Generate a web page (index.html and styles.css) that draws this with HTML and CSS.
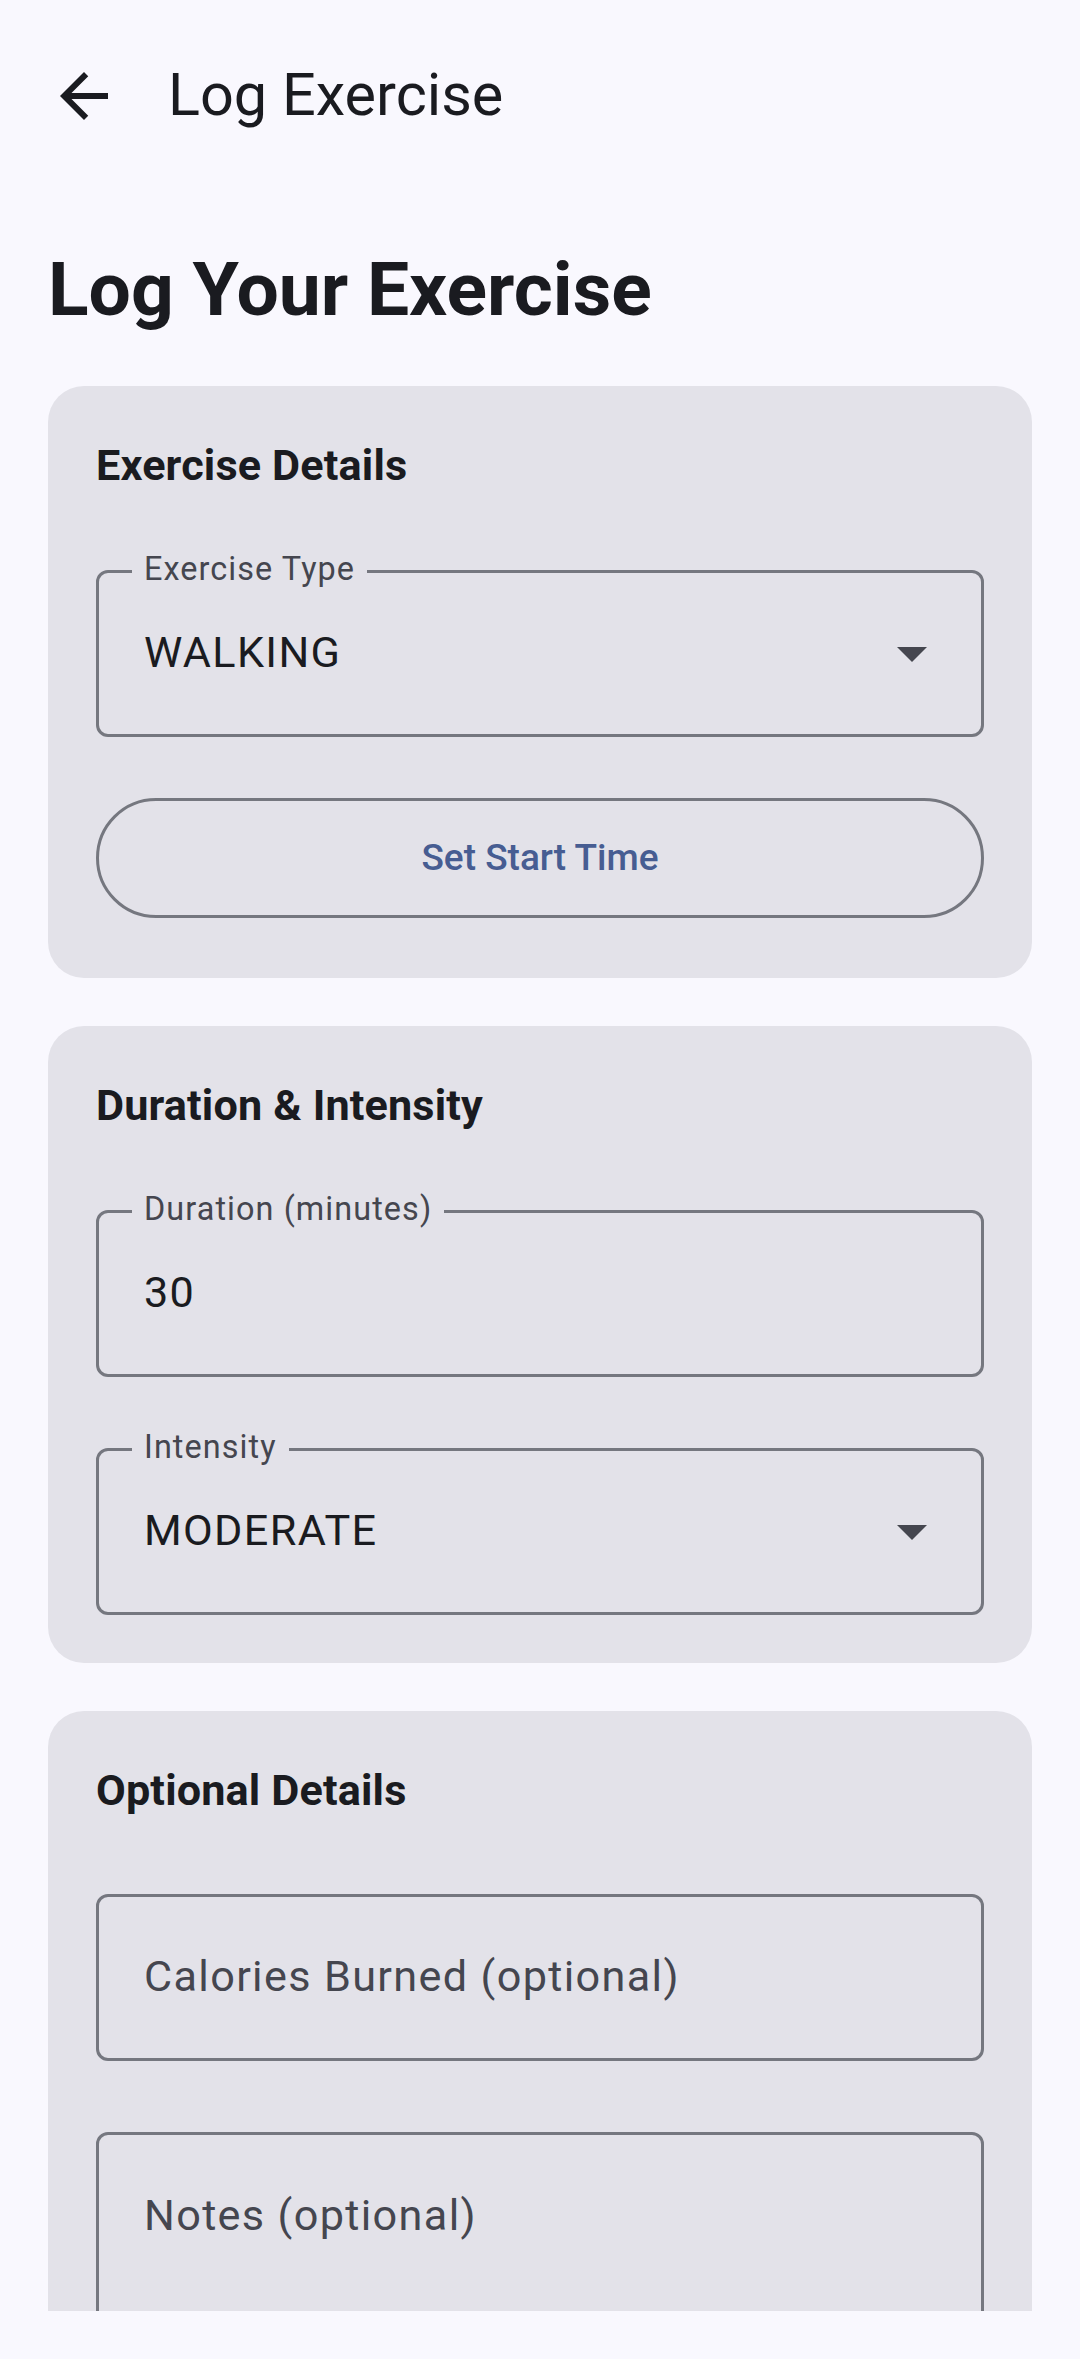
FILE: index.html
```html
<!DOCTYPE html>
<html lang="en">
<head>
<meta charset="utf-8">
<title>Log Exercise</title>
<link rel="stylesheet" href="styles.css">
</head>
<body>
<div class="screen">
  <header class="topbar">
    <button class="icon-btn" aria-label="Back">
      <svg class="icon" viewBox="0 0 24 24"><path d="M20 11H7.83l5.59-5.59L12 4l-8 8 8 8 1.41-1.41L7.83 13H20v-2z"/></svg>
    </button>
    <h1 class="topbar-title">Log Exercise</h1>
  </header>

  <main class="content">
    <h2 class="headline">Log Your Exercise</h2>

    <section class="card">
      <h3 class="card-title">Exercise Details</h3>
      <div class="field-wrap">
        <div class="field">
          <span class="field-label">Exercise Type</span>
          <span class="field-value">WALKING</span>
          <svg class="field-icon" viewBox="0 0 24 24"><path d="M7 10l5 5 5-5z"/></svg>
        </div>
      </div>
      <div class="btn-wrap">
        <button class="outlined-btn">Set Start Time</button>
      </div>
    </section>

    <section class="card">
      <h3 class="card-title">Duration &amp; Intensity</h3>
      <div class="field-wrap">
        <div class="field">
          <span class="field-label">Duration (minutes)</span>
          <span class="field-value">30</span>
        </div>
      </div>
      <div class="field-wrap">
        <div class="field">
          <span class="field-label">Intensity</span>
          <span class="field-value">MODERATE</span>
          <svg class="field-icon" viewBox="0 0 24 24"><path d="M7 10l5 5 5-5z"/></svg>
        </div>
      </div>
    </section>

    <section class="card">
      <h3 class="card-title">Optional Details</h3>
      <div class="field-wrap">
        <div class="field">
          <span class="field-placeholder">Calories Burned (optional)</span>
        </div>
      </div>
      <div class="field-wrap">
        <div class="field field--multi">
          <span class="field-placeholder">Notes (optional)</span>
        </div>
      </div>
    </section>
  </main>
</div>
</body>
</html>
```

FILE: styles.css
```css
* {
  box-sizing: border-box;
}

html, body {
  margin: 0;
  padding: 0;
  background: #f9f8fe;
}

body {
  font-family: Roboto, "Noto Sans", "Liberation Sans", sans-serif;
  color: #1a1b20;
}

.screen {
  width: 1080px;
  height: 2359px;
  display: flex;
  flex-direction: column;
  background: #f9f8fe;
  overflow: hidden;
}

/* Top app bar */
.topbar {
  height: 192px;
  flex: 0 0 192px;
  display: flex;
  align-items: center;
  padding-left: 12px;
}

.icon-btn {
  width: 144px;
  height: 144px;
  border: 0;
  padding: 0;
  background: transparent;
  display: flex;
  align-items: center;
  justify-content: center;
}

.icon {
  width: 72px;
  height: 72px;
  fill: #1a1b20;
}

.topbar-title {
  margin: 0 0 0 12px;
  font-size: 59.4px;
  line-height: 75.6px;
  font-weight: 400;
  color: #1a1b20;
}

/* Scroll content */
.content {
  height: 2119px;
  flex: 0 0 2119px;
  overflow: hidden;
  padding: 48px 48px 0;
  display: flex;
  flex-direction: column;
  gap: 48px;
}

.headline {
  margin: 0;
  font-size: 75px;
  line-height: 98px;
  font-weight: 700;
  color: #1a1b20;
}

.card {
  flex: 0 0 auto;
  background: #e3e2e9;
  border-radius: 36px;
  padding: 48px;
  display: flex;
  flex-direction: column;
  gap: 48px;
}

.card-title {
  margin: 0;
  font-size: 43.2px;
  line-height: 64.8px;
  font-weight: 700;
  letter-spacing: 0.15px;
  color: #1a1b20;
}

/* Outlined text field */
.field-wrap {
  padding-top: 23px;
}

.field {
  position: relative;
  height: 167px;
  border: 3px solid #75777f;
  border-radius: 12px;
  display: flex;
  align-items: center;
  padding: 0 33px 0 45px;
}

.field--multi {
  height: 290px;
  align-items: flex-start;
  padding-top: 49px;
}

.field-label {
  position: absolute;
  left: 33px;
  top: -25px;
  padding: 0 12px;
  background: #e3e2e9;
  font-size: 32.4px;
  line-height: 43.2px;
  letter-spacing: 1.08px;
  color: #45464f;
}

.field-value {
  flex: 1;
  font-size: 43.2px;
  line-height: 64.8px;
  letter-spacing: 1.35px;
  color: #1a1b20;
}

.field-placeholder {
  flex: 1;
  font-size: 43.2px;
  line-height: 64.8px;
  letter-spacing: 1.35px;
  color: #45464f;
}

.field-icon {
  width: 72px;
  height: 72px;
  flex: 0 0 72px;
  fill: #45464f;
}

/* Outlined button */
.btn-wrap {
  padding: 13px 0 12px;
}

.outlined-btn {
  width: 100%;
  height: 120px;
  border: 3px solid #75777f;
  border-radius: 60px;
  background: transparent;
  font-family: Roboto, "Noto Sans", "Liberation Sans", sans-serif;
  font-size: 37px;
  font-weight: 500;
  letter-spacing: 0;
  color: #475d92;
}
```
